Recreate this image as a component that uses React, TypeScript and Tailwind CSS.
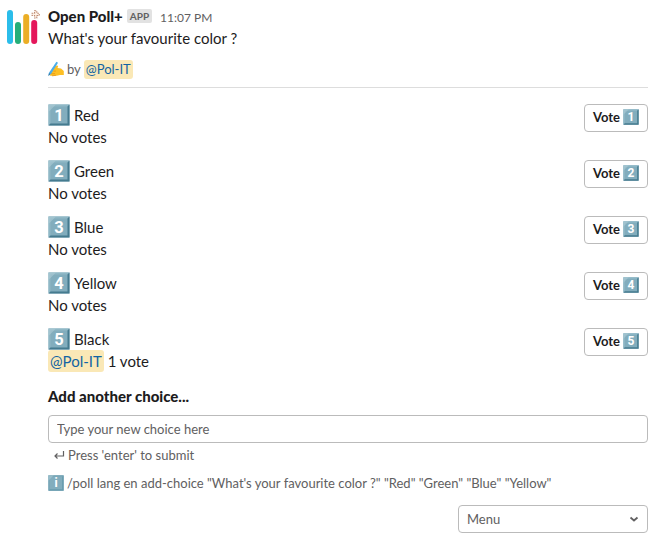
import React from "react";

const choices = [
  { n: "1", name: "Red" },
  { n: "2", name: "Green" },
  { n: "3", name: "Blue" },
  { n: "4", name: "Yellow" },
  { n: "5", name: "Black", voter: "@Pol-IT" },
];

function Keycap({ label, className, info = false }: { label: string; className: string; info?: boolean }) {
  return (
    <svg viewBox="0 0 22 22" className={className} aria-hidden="true">
      <rect x="0.5" y="0.5" width="21" height="21" fill="#82adbd" />
      <path d="M0.5 0.5H21.5L19.5 2.5H2.5V19.5L0.5 21.5Z" fill={info ? "#78a6b7" : "#8fb8c6"} />
      <path d="M21.5 0.5V21.5H0.5L2.5 19.5H19.5V2.5Z" fill={info ? "#659aad" : "#457b8f"} />
      <path d="M0.5 8V0.5H8Z" fill="#b3d0d9" opacity="0.5" />
      <text
        x="11"
        y="16.6"
        textAnchor="middle"
        className="fill-white font-['Roboto',sans-serif] text-[16.5px] font-bold"
      >
        {label}
      </text>
    </svg>
  );
}

function Logo() {
  return (
    <svg viewBox="0 0 36 36" className="size-9 shrink-0" aria-hidden="true">
      <rect x="1" y="2" width="6" height="34" rx="3" fill="#2bbdea" />
      <rect x="9" y="14" width="6" height="22" rx="3" fill="#25ae79" />
      <rect x="17.2" y="6" width="6" height="30" rx="3" fill="#ebae25" />
      <rect x="25.2" y="12" width="6" height="24" rx="3" fill="#e4175b" />
      <path
        d="M28.6 2.8h2.2v2.5h2.5v2.2h-2.5V10h-2.2V7.5h-2.5V5.3h2.5z"
        fill="#fff3e8"
        stroke="#bd8970"
        strokeWidth="1.1"
        strokeDasharray="1.6 1"
      />
    </svg>
  );
}

function WritingHand() {
  return (
    <svg viewBox="0 0 16 16" className="size-4 shrink-0" aria-hidden="true">
      <path d="M4.5 7 8 4.8Q10 4.2 10.2 5.6L9.4 7l3.6.6 2.8 2.4v4L12 13.9 8.7 14.8H2.6Q1.4 14.6 2 13.4L3 12.7 1.8 11.4Q2.2 10 4 10.2Z" fill="#fdbf24" />
      <path d="M5.5 10.2 8 10m-5 2.8 4-.2m-3 2.2 4-.5" stroke="#e59517" strokeWidth=".8" fill="none" />
      <path d="M8.4.8 10 1.7 3.3 12.6.4 14.8 1 11.7Z" fill="#4badec" />
      <path d="m1 12-.7 3 2.2-1.8Z" fill="#397ba5" />
    </svg>
  );
}

function Mention({ className }: { className: string }) {
  return <span className={`rounded-[3px] bg-[#fae8b6] px-[2px] text-[#1264a3] ${className}`}>@Pol-IT</span>;
}

export default function App() {
  return (
    <main className="flex h-[547px] w-[665px] gap-[6px] bg-white pl-[6px] pr-[17px] pt-2 font-['Lato',sans-serif] text-[15px] leading-[22px] text-[#1d1c1d]">
      <Logo />
      <div className="-mt-[3px] min-w-0 flex-1">
        <header className="flex h-[22px] items-center">
          <b className="font-black">Open Poll+</b>
          <span className="ml-[4px] flex h-[14px] items-center rounded-[2px] bg-[#e2e2e2] px-[3px] text-[10px] font-bold text-[#616061]">APP</span>
          <time className="ml-2 mt-[3px] text-[12px] text-[#616061]">11:07 PM</time>
        </header>
        <p>What's your favourite color ?</p>
        <div className="mt-[9px] flex h-[22px] items-center text-[13px] text-[#616061]">
          <WritingHand />
          <span className="ml-[3px] mr-[3px]">by</span>
          <Mention className="leading-[19px]" />
        </div>
        <hr className="mt-[7px] border-[#dddddd]" />
        <section className="mt-[16px]">
          {choices.map((choice) => (
            <div key={choice.n} className="flex h-14 justify-between">
              <div>
                <div className="flex h-[22px] items-center">
                  <Keycap label={choice.n} className="mr-[4px] size-[22px]" />
                  <span>{choice.name}</span>
                </div>
                <div className="h-[22px]">
                  {choice.voter ? <><Mention className="inline-block" /> 1 vote</> : "No votes"}
                </div>
              </div>
              <button className="flex h-7 w-16 items-center justify-center rounded border border-[#bbbbbb] pb-[2px] text-[13px] font-bold">
                <span className="mr-[3px]">Vote</span>
                <Keycap label={choice.n} className="size-4" />
              </button>
            </div>
          ))}
        </section>
        <label htmlFor="choice" className="mt-px block font-black">Add another choice...</label>
        <input id="choice" placeholder="Type your new choice here" className="mt-[8px] block h-7 w-full rounded border border-[#bbbbbb] px-2 text-[13px] outline-none placeholder:text-[#616061]" />
        <div className="mt-[3px] flex h-[18px] items-center pl-[5px] text-[13px] text-[#616061]">
          <svg viewBox="0 0 12 12" className="mr-[3px] size-3" fill="none" stroke="currentColor" strokeWidth="1.2" aria-hidden="true">
            <path d="M10.5 2v5H2M4.5 4.5 2 7l2.5 2.5" />
          </svg>
          Press 'enter' to submit
        </div>
        <div className="mt-[10px] flex h-[18px] items-center text-[13px] text-[#616061]">
          <Keycap label="i" info className="mr-[3px] size-4" />
          /poll lang en add-choice "What's your favourite color ?" "Red" "Green" "Blue" "Yellow"
        </div>
        <button className="ml-auto mt-[13px] flex h-7 w-[190px] items-center justify-between rounded border border-[#bbbbbb] px-2 text-[13px] text-[#616061]">
          Menu
          <svg viewBox="0 0 10 10" className="size-[10px]" fill="none" stroke="currentColor" strokeWidth="1.8" aria-hidden="true">
            <path d="m1.5 3.5 3.5 3 3.5-3" />
          </svg>
        </button>
      </div>
    </main>
  );
}
